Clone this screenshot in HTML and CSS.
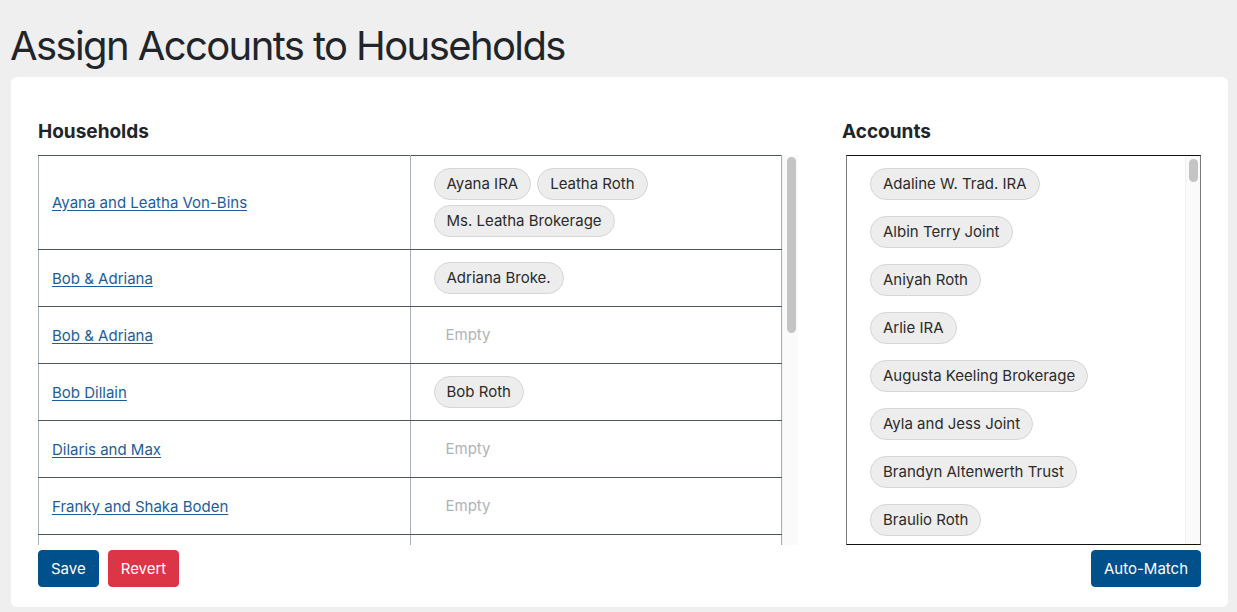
FILE: index.html
```html
<!DOCTYPE html>
<html lang="en">
<head>
<meta charset="utf-8">
<title>Assign Accounts to Households</title>
<link rel="stylesheet" href="styles.css">
</head>
<body>
<h1 class="page-title">Assign Accounts to Households</h1>
<main class="card">
  <div class="columns">
    <section class="households">
      <h2 class="section-title">Households</h2>
      <div class="scroll-frame">
        <div class="table-viewport">
          <table class="hh-table">
            <tbody>
              <tr><td class="hh-name"><a href="#">Ayana and Leatha Von-Bins</a></td><td class="hh-accounts"><div class="chips"><span class="chip">Ayana IRA</span><span class="chip">Leatha Roth</span><span class="chip">Ms. Leatha Brokerage</span></div></td></tr>
              <tr><td class="hh-name"><a href="#">Bob &amp; Adriana</a></td><td class="hh-accounts"><div class="chips"><span class="chip">Adriana Broke.</span></div></td></tr>
              <tr><td class="hh-name"><a href="#">Bob &amp; Adriana</a></td><td class="hh-accounts"><div class="empty">Empty</div></td></tr>
              <tr><td class="hh-name"><a href="#">Bob Dillain</a></td><td class="hh-accounts"><div class="chips"><span class="chip">Bob Roth</span></div></td></tr>
              <tr><td class="hh-name"><a href="#">Dilaris and Max</a></td><td class="hh-accounts"><div class="empty">Empty</div></td></tr>
              <tr><td class="hh-name"><a href="#">Franky and Shaka Boden</a></td><td class="hh-accounts"><div class="empty">Empty</div></td></tr>
              <tr class="row-clipped"><td class="hh-name"></td><td class="hh-accounts"></td></tr>
            </tbody>
          </table>
        </div>
        <div class="scroll-track"><div class="scroll-thumb thumb-table"></div></div>
      </div>
      <div class="actions">
        <button class="btn btn-primary" type="button">Save</button>
        <button class="btn btn-danger" type="button">Revert</button>
      </div>
    </section>
    <section class="accounts">
      <h2 class="section-title">Accounts</h2>
      <div class="account-box">
        <ul class="account-list">
          <li><span class="chip">Adaline W. Trad. IRA</span></li>
          <li><span class="chip">Albin Terry Joint</span></li>
          <li><span class="chip">Aniyah Roth</span></li>
          <li><span class="chip">Arlie IRA</span></li>
          <li><span class="chip">Augusta Keeling Brokerage</span></li>
          <li><span class="chip">Ayla and Jess Joint</span></li>
          <li><span class="chip">Brandyn Altenwerth Trust</span></li>
          <li><span class="chip">Braulio Roth</span></li>
        </ul>
        <div class="scroll-track track-accounts"><div class="scroll-thumb thumb-accounts"></div></div>
      </div>
      <div class="actions actions-right">
        <button class="btn btn-primary" type="button">Auto-Match</button>
      </div>
    </section>
  </div>
</main>
</body>
</html>
```
FILE: styles.css
```css
* { box-sizing: border-box; }
html, body { margin: 0; padding: 0; }
body {
  background: #efefef;
  font-family: "Inter", "Roboto", "Liberation Sans", sans-serif;
  color: #212529;
  padding: 0 9px 0 11px;
  height: 612px;
  overflow: hidden;
}
.page-title {
  margin: 0 0 0 -1px;
  padding: 22px 0 0 0;
  font-size: 40px;
  font-weight: 400;
  line-height: 48px;
  height: 77px;
  letter-spacing: -1.6px;
  color: #212529;
}
.card {
  background: #fff;
  border-radius: 6px;
  padding: 41px 27px 20px 27px;
  height: 530px;
}
.columns {
  display: grid;
  grid-template-columns: 761px 1fr;
  column-gap: 43px;
}
.section-title {
  margin: 0 0 10px 0;
  font-size: 19px;
  line-height: 27px;
  font-weight: 700;
  color: #212529;
}

/* households table with its scrollbar */
.scroll-frame {
  display: flex;
  height: 390px;
}
.table-viewport {
  width: 744px;
  height: 390px;
  overflow: hidden;
}
.scroll-track {
  flex: 0 0 16px;
  background: #fafafa;
  border-left: 1px solid #f0f0f0;
  padding: 2px 2px 0 4px;
}
.scroll-thumb {
  background: #c4c4c4;
  border-radius: 5px;
}
.thumb-table { height: 176px; }
.track-accounts {
  flex: 0 0 15px;
  padding: 3px 2px 0 3px;
}
.thumb-accounts { height: 23px; }

.hh-table {
  width: 744px;
  border-collapse: collapse;
  table-layout: fixed;
  font-size: 15px;
}
.hh-table td {
  width: 50%;
  vertical-align: middle;
  border-top: 1px solid #4a5663;
  border-bottom: 1px solid #4a5663;
  border-left: 1px solid #a9b0b8;
  border-right: 1px solid #a9b0b8;
}
.row-clipped td { height: 57px; }
.hh-name { padding: 12px 13px; }
.hh-name a {
  color: #1b5e9b;
  text-decoration: underline;
  text-underline-offset: 2px;
}
.hh-accounts { padding: 12px 12px 12px 23px; }
.chips {
  display: flex;
  flex-wrap: wrap;
  gap: 5px 6px;
}
.chip {
  display: inline-block;
  height: 32px;
  line-height: 30px;
  padding: 0 12px;
  border: 1px solid #d6d6d6;
  background: #ededed;
  border-radius: 16px;
  font-size: 15px;
  color: #2b2b2b;
  white-space: nowrap;
}
.empty {
  height: 32px;
  line-height: 32px;
  padding-left: 12px;
  color: #b0b3b7;
}
.actions {
  display: flex;
  gap: 9px;
  margin-top: 5px;
}
.actions-right { justify-content: flex-end; }
.btn {
  font-family: inherit;
  font-size: 15px;
  height: 37px;
  padding: 0 12px;
  border-radius: 4px;
  border: 1px solid transparent;
  color: #fff;
  cursor: pointer;
}
.btn-primary { background: #00508c; border-color: #00508c; }
.btn-danger { background: #dc3545; border-color: #dc3545; }

/* accounts list */
.account-box {
  display: flex;
  margin-left: 4px;
  height: 390px;
  border-top: 1px solid #111;
  border-bottom: 1px solid #111;
  border-left: 1px solid #7a7a7a;
  border-right: 1px solid #7a7a7a;
}
.account-list {
  flex: 1;
  overflow: hidden;
  list-style: none;
  margin: 0;
  padding: 12px 0 12px 23px;
  display: flex;
  flex-direction: column;
  align-items: flex-start;
  gap: 16px;
}
```
